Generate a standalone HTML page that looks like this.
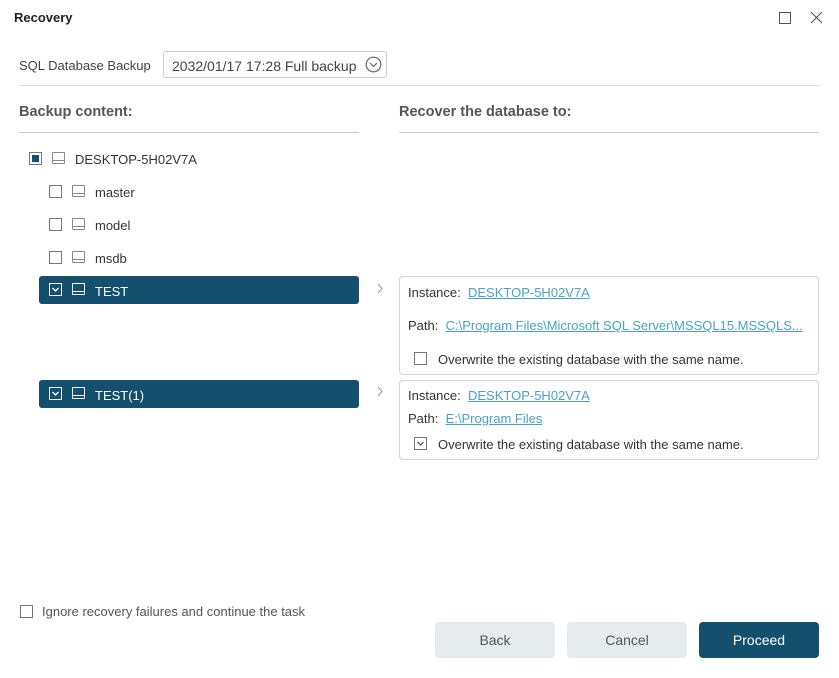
<!DOCTYPE html>
<html><head><meta charset="utf-8"><style>
*{margin:0;padding:0;box-sizing:border-box}
body{width:839px;height:678px;background:#fff;font-family:"Liberation Sans",sans-serif;color:#333;position:relative;overflow:hidden;font-size:13px}
.a{position:absolute}
.cb{position:absolute;width:13px;height:13px;border:1px solid #777;background:#fff}
.disk{position:absolute;width:13px;height:12px;border:1px solid #888;border-radius:1px}
.disk:after{content:"";position:absolute;left:0;right:0;bottom:2px;border-top:1px solid #888}
.sel{position:absolute;left:39px;width:320px;height:28px;background:#14506e;border-radius:3px;color:#fff}
.sel .cb{border-color:#fff;background:#14506e}
.sel .disk,.sel .disk:after{border-color:#fff}
.lnk{color:#4aa3c5;text-decoration:underline}
.box{position:absolute;left:399px;width:420px;border:1px solid #d4d4d4;border-radius:4px}
.btn{position:absolute;top:622px;width:120px;height:36px;border-radius:4px;background:#e6ebee;color:#555;font-size:14px;text-align:center;line-height:36px}
</style></head><body>
<div class="a" style="left:14px;top:10px;font-size:13px;font-weight:bold;color:#222">Recovery</div>
<div class="a" style="left:779px;top:12px;width:12px;height:12px;border:1.2px solid #555"></div>
<svg class="a" style="left:810px;top:11px" width="13" height="13"><path d="M1 1L12 12M12 1L1 12" stroke="#555" stroke-width="1.1"/></svg>
<div class="a" style="left:19px;top:58px;font-size:13px;color:#444">SQL Database Backup</div>
<div class="a" style="left:163px;top:51px;width:224px;height:27px;border:1px solid #ccc;border-radius:3px;font-size:14px;color:#444;padding:6px 0 0 8px">2032/01/17 17:28 Full backup</div>
<svg class="a" style="left:365px;top:56px" width="17" height="17"><circle cx="8.5" cy="8.5" r="7.3" fill="none" stroke="#666" stroke-width="1.2"/><path d="M5 7L8.5 10.5L12 7" fill="none" stroke="#666" stroke-width="1.2"/></svg>
<div class="a" style="left:19px;top:85px;width:801px;border-top:1px solid #ddd"></div>
<div class="a" style="left:19px;top:104px;font-size:14.5px;font-weight:bold;color:#555">Backup content:</div>
<div class="a" style="left:399px;top:104px;font-size:14.5px;font-weight:bold;color:#555">Recover the database to:</div>
<div class="a" style="left:19px;top:132px;width:340px;border-top:1px solid #ccc"></div>
<div class="a" style="left:399px;top:132px;width:420px;border-top:1px solid #ccc"></div>

<div class="cb" style="left:29px;top:152px"><div style="position:absolute;left:2px;top:2px;width:7px;height:7px;background:#14506e"></div></div>
<div class="disk" style="left:52px;top:152px"></div>
<div class="a" style="left:75px;top:152px">DESKTOP-5H02V7A</div>
<div class="cb" style="left:49px;top:185px"></div><div class="disk" style="left:72px;top:185px"></div><div class="a" style="left:95px;top:185px">master</div>
<div class="cb" style="left:49px;top:218px"></div><div class="disk" style="left:72px;top:218px"></div><div class="a" style="left:95px;top:218px">model</div>
<div class="cb" style="left:49px;top:251px"></div><div class="disk" style="left:72px;top:251px"></div><div class="a" style="left:95px;top:251px">msdb</div>

<div class="sel" style="top:276px"><div class="cb" style="left:10px;top:7px"><svg width="11" height="11" style="position:absolute;left:0;top:0"><path d="M2.5 4L5.5 7L8.5 4" fill="none" stroke="#fff" stroke-width="1.3"/></svg></div><div class="disk" style="left:33px;top:7px"></div><div class="a" style="left:56px;top:8px">TEST</div></div>
<div class="sel" style="top:380px"><div class="cb" style="left:10px;top:7px"><svg width="11" height="11" style="position:absolute;left:0;top:0"><path d="M2.5 4L5.5 7L8.5 4" fill="none" stroke="#fff" stroke-width="1.3"/></svg></div><div class="disk" style="left:33px;top:7px"></div><div class="a" style="left:56px;top:8px">TEST(1)</div></div>
<svg class="a" style="left:376px;top:283px" width="8" height="12"><path d="M2 1L6 5.5L2 10" fill="none" stroke="#999"/></svg>
<svg class="a" style="left:376px;top:386px" width="8" height="12"><path d="M2 1L6 5.5L2 10" fill="none" stroke="#999"/></svg>

<div class="box" style="top:276px;height:99px">
<div class="a" style="left:8px;top:8px">Instance:&nbsp; <span class="lnk">DESKTOP-5H02V7A</span></div>
<div class="a" style="left:8px;top:41px;white-space:nowrap">Path:&nbsp; <span class="lnk">C:\Program Files\Microsoft SQL Server\MSSQL15.MSSQLS...</span></div>
<div class="cb" style="left:14px;top:75px"></div>
<div class="a" style="left:38px;top:75px">Overwrite the existing database with the same name.</div>
</div>
<div class="box" style="top:380px;height:80px">
<div class="a" style="left:8px;top:7px">Instance:&nbsp; <span class="lnk">DESKTOP-5H02V7A</span></div>
<div class="a" style="left:8px;top:30px">Path:&nbsp; <span class="lnk">E:\Program Files</span></div>
<div class="cb" style="left:14px;top:56px"><svg width="11" height="11" style="position:absolute;left:0;top:0"><path d="M2.5 4L5.5 7L8.5 4" fill="none" stroke="#555" stroke-width="1.3"/></svg></div>
<div class="a" style="left:38px;top:56px">Overwrite the existing database with the same name.</div>
</div>

<div class="cb" style="left:20px;top:605px"></div>
<div class="a" style="left:42px;top:604px;color:#555">Ignore recovery failures and continue the task</div>
<div class="btn" style="left:435px">Back</div>
<div class="btn" style="left:567px">Cancel</div>
<div class="btn" style="left:699px;background:#14506e;color:#fff">Proceed</div>
</body></html>
